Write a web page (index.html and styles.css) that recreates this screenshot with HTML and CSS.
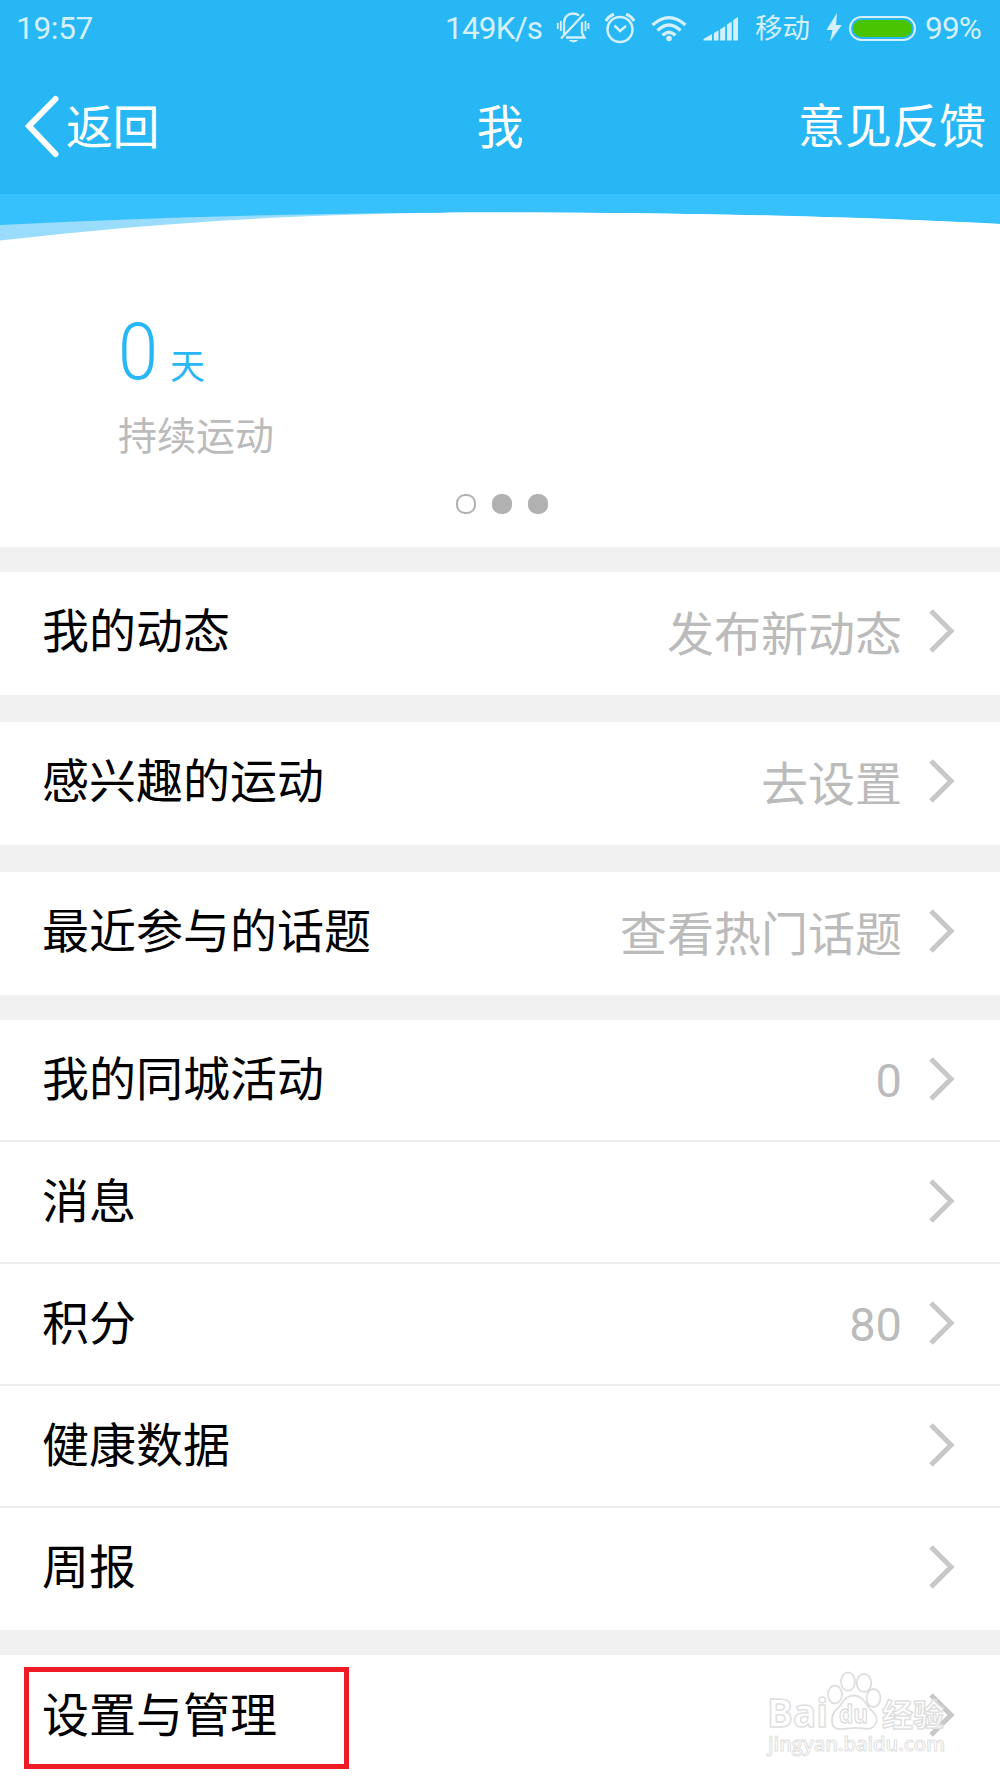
FILE: index.html
```html
<!DOCTYPE html>
<html lang="zh-CN">
<head>
<meta charset="utf-8">
<title>我</title>
<link rel="stylesheet" href="styles.css">
</head>
<body>
<svg width="0" height="0" class="defs">
  <symbol id="chevron" viewBox="0 0 28 46"><path d="M3 2 23 22 3 42" fill="none" stroke="#c8c8c8" stroke-width="5"/></symbol>
</svg>
<main class="screen">
  <header class="top">
    <div class="status">
      <span class="clock">19:57</span>
      <div class="indicators">
        <span class="speed">149K/s</span>
        <svg class="bell" width="34" height="34" viewBox="0 0 34 34" fill="none" stroke="#d4f0fd" stroke-width="2.300">
          <path d="M8 24V13c0-6 4-9.500 9-9.500 2.500 0 4.500.7 6 2M10 27.500h18.500L26 23V12M5 28.500 28 4"/>
          <path d="M13.500 30.500h8q-4 3-8 0z" fill="#d4f0fd" stroke-width="1"/>
          <path d="M1.800 13v6M4.800 11v10M29.500 11v10M32.500 13v6" stroke-width="1.800"/>
        </svg>
        <svg class="alarm" width="32" height="34" viewBox="0 0 32 34" fill="none" stroke="#d4f0fd" stroke-width="2.500">
          <circle cx="16" cy="19.500" r="12.500"/>
          <path d="M10.500 15.500 16 21l6-5"/><path d="M2 11Q4.500 6 10 4.200M22 4.200Q27.500 6 30 11" stroke-width="3"/>
        </svg>
        <svg class="wifi" width="38" height="30" viewBox="0 0 38 30" fill="none" stroke="#d4f0fd" stroke-width="3.300">
          <path d="M2.500 12Q19-2.800 35.500 12M7.500 17.500Q19 6.500 30.500 17.500M12.500 22.300Q19 16 25.500 22.300"/>
          <circle cx="19" cy="25.500" r="2.800" fill="#d4f0fd" stroke="none"/>
        </svg>
        <svg class="signal" width="36" height="26" viewBox="0 0 36 26" fill="#d4f0fd">
          <path d="M.5 24.500V23l8.500-5v6.500zM10.800 17.200l4.700-2.900v10.200h-4.700zM17.200 13.200l5-3v14.300h-5zM24 8.500 28.700 5.500v19H24zM30.300 4 35 1v23.500h-4.700z"/>
        </svg>
        <span class="carrier">移动</span>
        <svg class="bolt" width="16" height="30" viewBox="0 0 16 30" fill="#d4f0fd"><path d="M11 0 .5 17h6L4 28.500 15.800 12H10z"/></svg>
        <span class="battery"><span class="charge"></span></span>
        <span class="percent">99%</span>
      </div>
    </div>
    <nav class="nav">
      <a class="back"><svg width="36" height="64" viewBox="0 0 36 64"><path d="M30.500 5 4 32 30.500 60" fill="none" stroke="#fff" stroke-width="6" stroke-linecap="round"/></svg><span>返回</span></a>
      <h1>我</h1>
      <a class="feedback">意见反馈</a>
    </nav>
  </header>

  <section class="hero">
    <svg class="wave" width="1000" height="48" viewBox="0 0 1000 48">
      <path d="M0 0H1000V30Q760 18.500 500 18.500H450L0 46z" fill="#36c1fc"/>
      <path d="M0 31Q240 18.700 500 18.500L500 30 0 48z" fill="#99dcfb"/>
      <path d="M0 46.500C170 27 320 18.500 500 18.500 690 18.500 850 22.500 1000 30V48H0z" fill="#fff"/>
    </svg>
    <div class="stat">
      <p class="days"><span class="num">0</span><span class="unit">天</span></p>
      <p class="caption">持续运动</p>
    </div>
    <div class="dots"><i class="open"></i><i></i><i></i></div>
  </section>

  <section class="group first"><a class="row"><span>我的动态</span><em>发布新动态</em><svg><use href="#chevron"/></svg></a></section>
  <section class="group wide"><a class="row"><span>感兴趣的运动</span><em>去设置</em><svg><use href="#chevron"/></svg></a></section>
  <section class="group wide"><a class="row"><span>最近参与的话题</span><em>查看热门话题</em><svg><use href="#chevron"/></svg></a></section>
  <section class="group list">
    <a class="row"><span>我的同城活动</span><em>0</em><svg><use href="#chevron"/></svg></a>
    <a class="row"><span>消息</span><em></em><svg><use href="#chevron"/></svg></a>
    <a class="row"><span>积分</span><em>80</em><svg><use href="#chevron"/></svg></a>
    <a class="row"><span>健康数据</span><em></em><svg><use href="#chevron"/></svg></a>
    <a class="row"><span>周报</span><em></em><svg><use href="#chevron"/></svg></a>
  </section>
  <section class="group last">
    <a class="row"><span>设置与管理</span><em></em><svg><use href="#chevron"/></svg></a>
    <div class="highlight"></div>
    <svg class="watermark" width="200" height="110" viewBox="0 0 200 110">
      <g fill="#fff" fill-opacity=".75" stroke="#dfdfdf" stroke-width="1.800">
        <ellipse cx="75" cy="32.500" rx="7" ry="9"/><ellipse cx="88" cy="19.500" rx="7" ry="9.200"/><ellipse cx="104" cy="21" rx="7.300" ry="9"/><ellipse cx="113.500" cy="36" rx="7" ry="9"/>
        <path d="M94 33.500C84 33.500 83 42 77 47S69 66.500 79 67C87 67.500 94 64.500 104 66.500 117 68.500 120 56 113 50S104 33.500 94 33.500z"/>
      </g>
      <g class="mark">
        <text x="7" y="65" font-size="39" textLength="61" lengthAdjust="spacingAndGlyphs">Bai</text>
        <text x="79" y="61" font-size="25" textLength="29" lengthAdjust="spacingAndGlyphs">du</text>
        <text x="122" y="64" font-size="31" textLength="62" lengthAdjust="spacingAndGlyphs">经验</text>
        <text class="url" x="8" y="89" font-size="20" textLength="177" lengthAdjust="spacingAndGlyphs">jingyan.baidu.com</text>
      </g>
    </svg>
  </section>
</main>
</body>
</html>
```
FILE: styles.css
```css
* { box-sizing: border-box; }
body {
  margin: 0;
  background: #f1f1f1;
  color: #000;
  font-family: Roboto, "Noto Sans CJK SC", sans-serif;
  font-weight: 400;
}
p, h1 { margin: 0; font-weight: inherit; }
em, i { font-style: normal; }
.defs { display: block; position: absolute; }
.screen { width: 1000px; height: 1778px; overflow: hidden; }

.top { height: 194px; background: #27b7f4; }
.status {
  display: flex;
  justify-content: space-between;
  align-items: center;
  height: 58px;
  padding: 0 17px 0 16px;
  color: #d4f0fd;
  font-size: 31.500px;
  line-height: 58px;
}
.clock, .speed, .percent { white-space: nowrap; }
.clock { letter-spacing: -.3px; }
.speed { letter-spacing: -.8px; }
.percent { letter-spacing: -.8px; }
.indicators { display: flex; align-items: center; }
.speed { width: 98px; margin-right: 13px; }
.bell { margin: -4px 14px 0 0; }
.alarm { margin: -5px 14px 0 0; }
.wifi { margin: -3px 15px 0 0; }
.signal { margin: -1px 16px 0 0; }
.carrier { width: 56px; margin-right: 15px; font-size: 27.500px; }
.bolt { margin: -2px 7px 0 0; }
.battery {
  width: 67px;
  height: 25px;
  margin: -2px 9px 0 0;
  padding: 2px;
  border: 2px solid #d4f0fd;
  border-radius: 13px;
}
.charge { display: block; height: 17px; border-radius: 9px; background: #48c400; }
.percent { width: 58px; }

.nav {
  display: grid;
  grid-template-columns: 1fr auto 1fr;
  align-items: center;
  height: 136px;
  padding: 0 14px 0 25px;
  color: #fff;
  font-size: 47px;
  line-height: 70px;
}
.nav svg { margin-right: 5px; }
.nav h1 { margin: 3px 0 0 -11px; font-size: 47px; }
.back { display: flex; align-items: center; }
.back span { margin-top: 4px; letter-spacing: -.5px; }
.feedback { justify-self: end; margin-top: 2px; }

.hero { height: 353px; background: #fff; }
.wave { display: block; }
.stat { height: 222px; padding: 67px 0 0 118px; }
.days { display: flex; align-items: baseline; height: 86px; line-height: 86px; color: #27b7f4; font-weight: 300; }
.num { width: 52px; font-size: 80px; transform: scaleX(.9); transform-origin: 0 50%; }
.unit { font-size: 35px; font-weight: 400; }
.caption { margin-top: 14px; color: #bbb; font-size: 39px; line-height: 56px; }
.dots { display: flex; justify-content: center; gap: 16px; padding: 30px 0 0 3px; }
.dots i { width: 20px; height: 20px; border-radius: 9px; background: #b1b1b1; }
.dots .open { border: 2.500px solid #b1b1b1; background: none; }

.group { background: #fff; }
.first { margin-top: 25px; }
.wide { margin-top: 27.500px; }
.list { margin-top: 25px; }
.row {
  display: flex;
  align-items: center;
  height: 122.500px;
  padding: 0 44px 2px 42px;
  font-size: 47px;
  line-height: 70px;
}
.row span { flex: 1; }
.row em { color: #bbb; margin: 6px 26px 0 0; }
.row svg { width: 28px; height: 46px; }
.list .row { height: 122.200px; border-bottom: 2px solid #eee; padding-bottom: 0; }
.list .row:last-child { border-bottom: 0; padding-bottom: 2px; }
.list em { margin-top: 2px; }
.last { position: relative; height: 124px; margin-top: 25px; }
.highlight {
  position: absolute;
  left: 24px;
  top: 12px;
  width: 325px;
  height: 102px;
  border: 5px solid #ee1c25;
}
.watermark { position: absolute; left: 760px; top: 6.500px; }
.mark {
  font-family: "Open Sans", "Noto Sans CJK SC", sans-serif;
  font-weight: 700;
  fill: #fff;
  fill-opacity: .75;
  stroke: #dfdfdf;
  stroke-width: 1.500px;
}
.url { font-weight: 600; stroke-width: 1px; }
```
